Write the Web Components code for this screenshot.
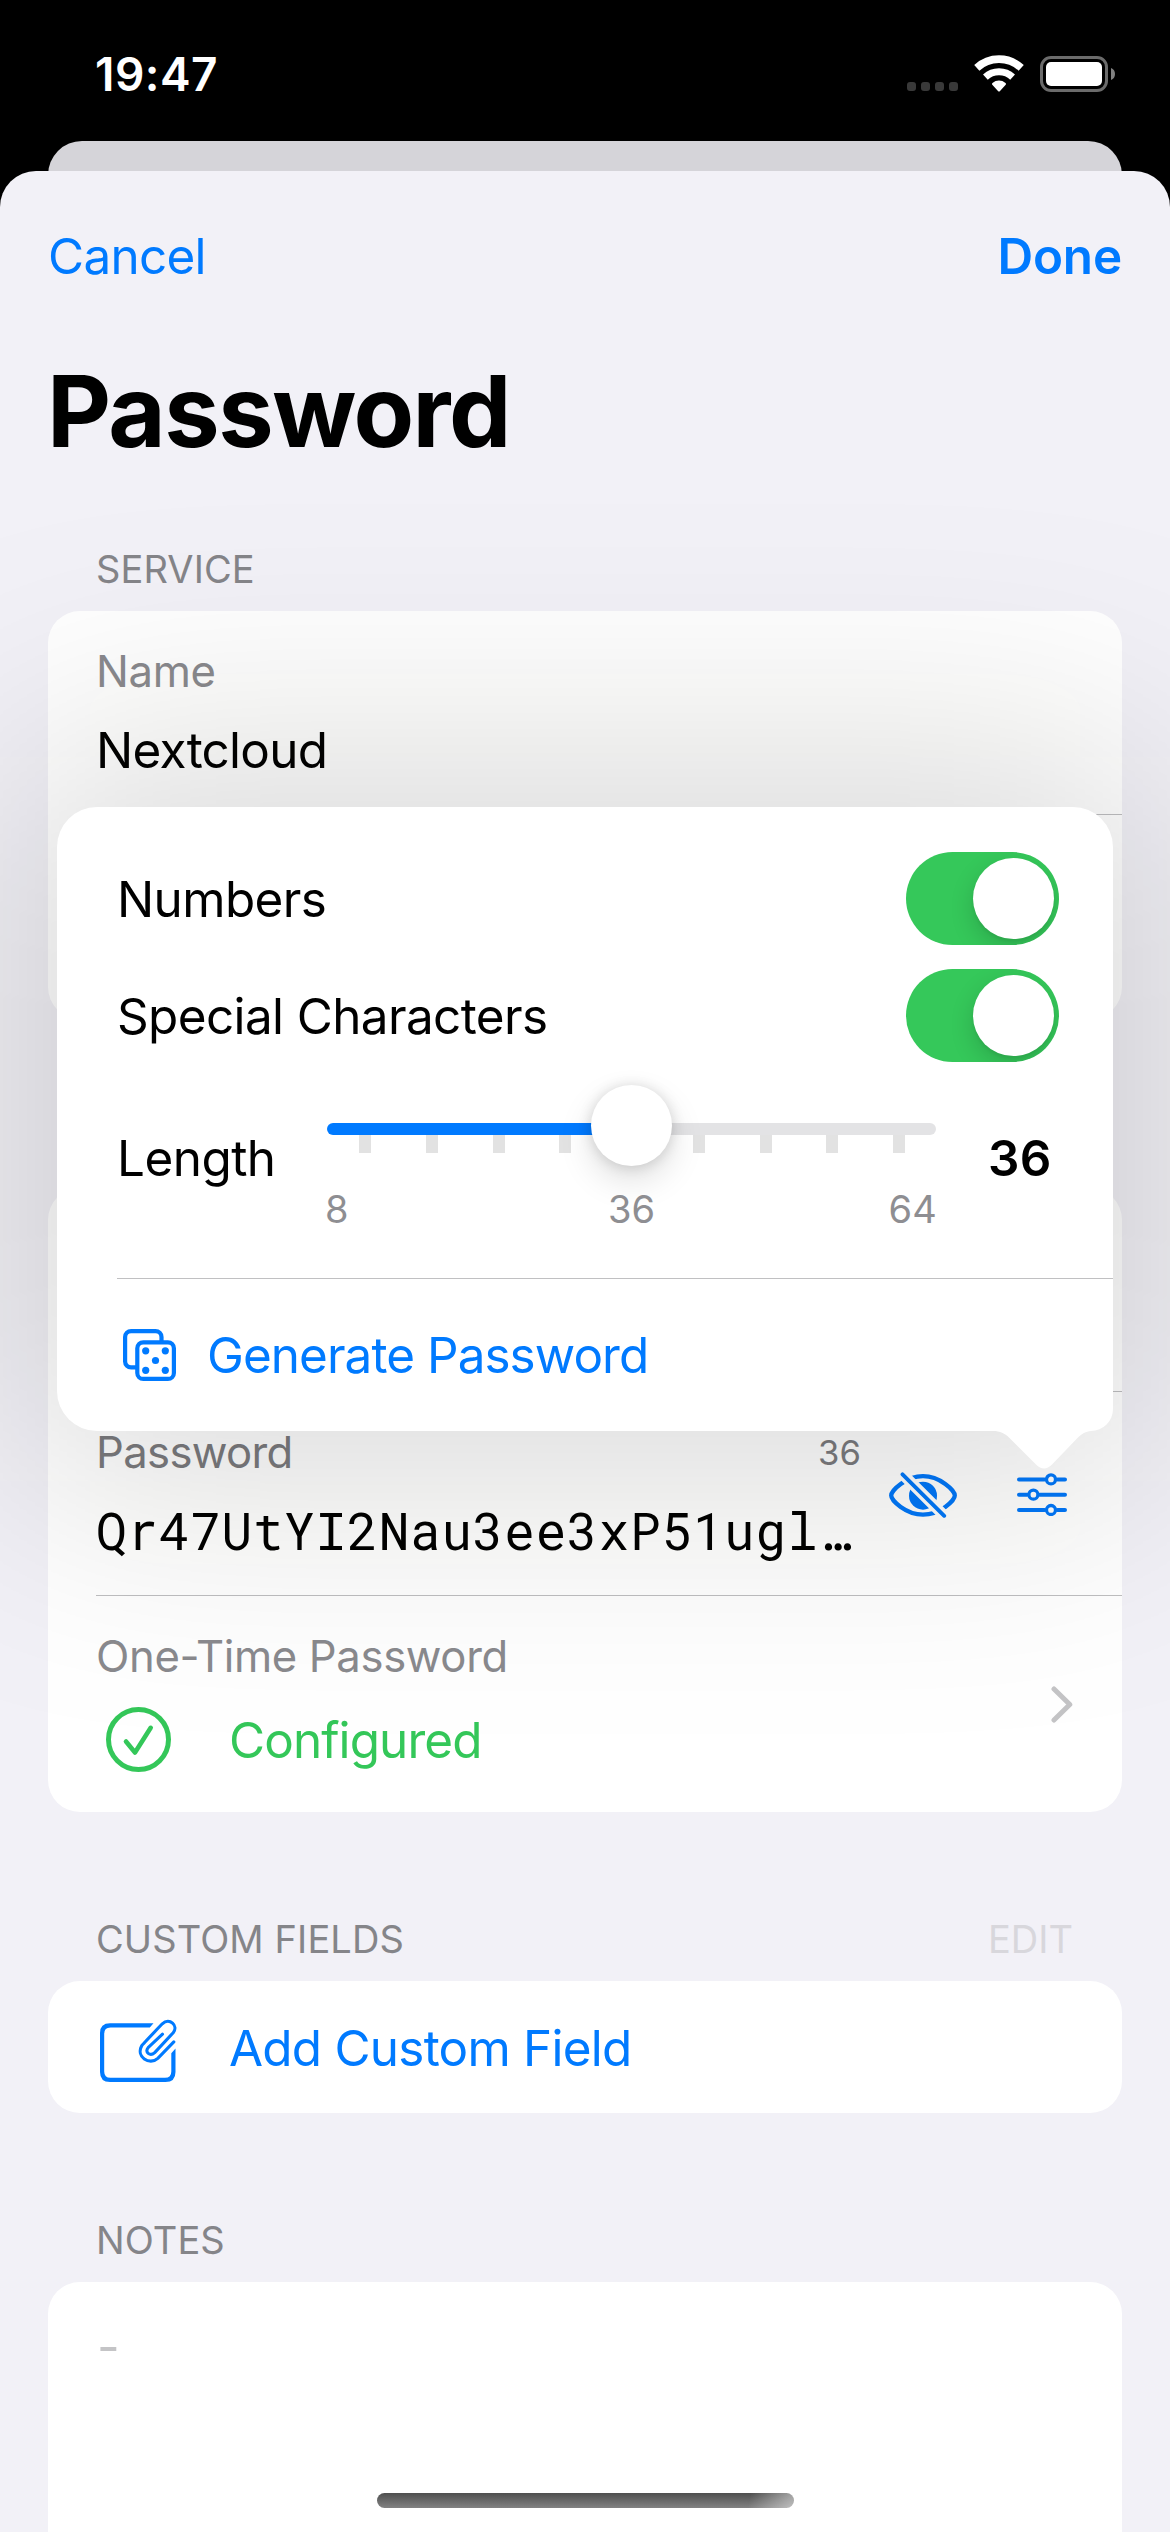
<!DOCTYPE html>
<html lang="en">
<head>
<meta charset="utf-8">
<title>Password</title>
<style>
html,body{margin:0;padding:0;background:#000}
body{width:1170px;height:2532px;overflow:hidden;font-family:Inter,"Liberation Sans",sans-serif;color:#000}
</style>
</head>
<body>
<phone-screen></phone-screen>
<script>
const define = (name, css, html) => customElements.define(name, class extends HTMLElement {
  constructor() {
    super();
    this.attachShadow({ mode: 'open' }).innerHTML = `<style>*{box-sizing:border-box}${css}</style>${html}`;
  }
});

define('status-bar', `
  :host{display:flex;flex:none;height:141px;padding:54px 55px 0 95px;justify-content:space-between;align-items:flex-start;box-sizing:border-box}
  .time{font-size:46px;font-weight:600;line-height:41px;letter-spacing:.46px;color:#fff}
  svg{display:block;margin-top:1px}
`, `
  <span class="time">19:47</span>
  <svg width="208" height="38" viewBox="0 0 208 38" fill="none">
    <g fill="#393939"><rect x="0" y="27" width="9" height="9" rx="3"/><rect x="14" y="27" width="9" height="9" rx="3"/><rect x="28" y="27" width="9" height="9" rx="3"/><rect x="42" y="27" width="9" height="9" rx="3"/></g>
    <g stroke="#fff"><path stroke-width="7.6" d="M69.8 12.9A32.6 32.6 0 0 1 114.2 12.9"/><path stroke-width="7" d="M78.4 22.1A20 20 0 0 1 105.6 22.1"/></g>
    <path fill="#fff" d="M91.2 36.2L85.3 29.8C84.8 29.2 84.9 28.5 85.5 28C89.3 24.7 94.7 24.7 98.5 28C99.1 28.5 99.2 29.2 98.7 29.8L92.8 36.2Q92 37 91.2 36.2Z"/>
    <rect x="134.5" y="2.5" width="65" height="33" rx="9.5" stroke="#6b6b6b" stroke-width="3"/>
    <rect x="139" y="7" width="56" height="24" rx="5" fill="#fff"/>
    <path fill="#808080" d="M204 13Q208 14.500 208 19T204 25Z"/>
  </svg>
`);

define('nav-bar', `
  :host{display:flex;flex:none;height:170px;padding:0 48px;justify-content:space-between;align-items:center;color:#007aff;font-size:49.4px;line-height:60px;box-sizing:border-box}
  .cancel{letter-spacing:-.7px}
  .done{font-weight:600;letter-spacing:-.15px}
`, `<span class="cancel"><slot name="left"></slot></span><span class="done"><slot name="right"></slot></span>`);

define('large-title', `
  :host{display:flex;flex:none;height:140px;align-items:center;padding-left:47px;font-size:99px;line-height:120px;font-weight:700;letter-spacing:-1.53px}
`, `<slot></slot>`);

define('section-header', `
  :host{display:flex;flex:none;height:169px;box-sizing:border-box;padding:0 97px 19px 96px;align-items:flex-end;justify-content:space-between;font-size:38px;line-height:46px;letter-spacing:.1px;color:#858589}
  :host([first]){height:130px}
  .act{color:#d8d7dc;letter-spacing:0}
`, `<span><slot></slot></span><span class="act"><slot name="action"></slot></span>`);

define('form-card', `
  :host{display:flex;flex-direction:column;flex:none;margin:0 48px;border-radius:32px;background:#fff;overflow:hidden}
  :host([grow]){flex:1;border-radius:32px 32px 0 0}
`, `<slot></slot>`);

define('form-row', `
  :host{display:flex;flex-direction:column;height:204px}
  .body{flex:1;display:flex;align-items:stretch;padding:0 49px 0 48px}
  .text{flex:1;min-width:0;display:flex;flex-direction:column;padding-top:35px}
  .label{display:flex;justify-content:space-between;font-size:43.6px;line-height:52px;letter-spacing:var(--label-ls,-.34px);color:var(--label-color,#8a8a8e);white-space:nowrap}
  .note{font-size:34.6px;letter-spacing:.14px;line-height:50px}
  .value{margin-top:var(--value-gap,22px);font-size:49.4px;line-height:60px;letter-spacing:var(--value-ls,-.72px);white-space:nowrap}
  .tools{flex:none;display:flex;align-items:center}
  .line{flex:none;height:1px;margin-left:48px;background:#bfbfc1}
  :host([last]) .line{display:none}
`, `
  <div class="body">
    <div class="text"><div class="label"><slot name="label"></slot><span class="note"><slot name="note"></slot></span></div><div class="value"><slot></slot></div></div>
    <div class="tools"><slot name="tools"></slot></div>
  </div>
  <div class="line"></div>
`);

define('password-text', `
  :host{display:block;font-family:"Roboto Mono","Liberation Mono",monospace;font-size:51px;line-height:60px;letter-spacing:.8px}
`, `<slot></slot>`);

define('row-tools', `
  :host{display:flex;align-items:center;gap:60px;padding:2px 6px 0 28px}
  svg{display:block}
`, `
  <svg width="68" height="46" viewBox="0 0 68 46" fill="none" stroke-linecap="round">
    <mask id="cut" maskUnits="userSpaceOnUse" x="-2" y="-2" width="72" height="50"><rect x="-2" y="-2" width="72" height="50" fill="#fff"/><path d="M8 -3.500L61 49.500" stroke="#000" stroke-width="11"/></mask>
    <g mask="url(#cut)"><path stroke="#0077fa" stroke-width="4.300" d="M2.200 23.500C2.200 18.500 17 4.200 34 4.200S65.800 18.500 65.800 23.500S51 42.700 34 42.700S2.200 28.500 2.200 23.500Z"/><circle cx="34" cy="23.700" r="14" fill="#0077fa"/></g>
    <path stroke="#0077fa" stroke-width="3.900" d="M13.500 2.300L55.200 43.800"/>
  </svg>
  <svg width="50" height="43" viewBox="0 0 50 43" fill="none" stroke="#0077fa" stroke-linecap="round">
    <path stroke-width="4" d="M2 6.400H27.500M40.500 6.400H48M2 21.700H10M22.800 21.700H48M2 37H27.500M40.500 37H48"/>
    <g stroke-width="3.300"><circle cx="34" cy="6.400" r="4.500"/><circle cx="16.400" cy="21.700" r="4.500"/><circle cx="34" cy="37" r="4.500"/></g>
  </svg>
`);

define('disclosure-chevron', `:host{display:block}svg{display:block}`, `
  <svg width="22" height="37" viewBox="0 0 22 37" fill="none"><path d="M3 3L18.800 18.500L3 34" stroke="#c4c4c6" stroke-width="5" stroke-linecap="round" stroke-linejoin="round"/></svg>`);

define('icon-label', `
  :host{display:flex;align-items:center;gap:49px}
  .icon{flex:none;display:flex;width:84px;justify-content:center;padding-top:var(--drop,0)}
`, `<span class="icon"><slot name="icon"></slot></span><span><slot></slot></span>`);

define('check-icon', `:host{display:block;height:65px}svg{display:block}`, `
  <svg width="65" height="65" viewBox="0 0 65 65" fill="none" stroke="#34c759"><circle cx="32.500" cy="32.500" r="30" stroke-width="5"/><path stroke-width="4.600" stroke-linecap="round" stroke-linejoin="round" d="M20 34.500L29 45.500L44.700 20.800"/></svg>`);

define('attach-icon', `:host{display:block}svg{display:block;overflow:visible}`, `
  <svg width="76" height="62" viewBox="0 0 76 62" fill="none" stroke="#007aff">
    <path fill="#007aff" stroke="none" d="M53.500 3.300H10Q0 3.300 0 13V52Q0 62 10 62H65.500Q75.500 62 75.500 52V28.500L71.300 33.200V51.500Q71.300 57.800 65 57.800H10.500Q4.200 57.800 4.200 51.500V14Q4.200 7.600 10.500 7.600H49.800Z"/>
    <path stroke-width="3.100" stroke-linecap="round" stroke-linejoin="round" d="M73.800 21.900L57.800 38.300C49.500 46 35.500 36.500 41.800 25.600Q42.300 24.800 62.300 3.800C69.500 -2.800 78.800 5.600 73.200 12.700L54.700 32.600C50 37 44.300 32 48.100 27.700L62.500 14.200"/>
  </svg>`);

define('dice-icon', `:host{display:block}svg{display:block}`, `
  <svg width="53" height="52" viewBox="0 0 53 52" fill="none" stroke="#007aff" stroke-width="4.200">
    <path d="M13 38.400H8.100a6 6 0 0 1-6-6V8.100a6 6 0 0 1 6-6H32.500a6 6 0 0 1 6 6V12"/>
    <rect x="14.300" y="13.300" width="36.600" height="36.600" rx="6"/>
    <g fill="#007aff" stroke="none"><circle cx="22.700" cy="21.800" r="3.600"/><circle cx="42.300" cy="21.800" r="3.600"/><circle cx="32.500" cy="31.500" r="3.600"/><circle cx="22.700" cy="41.300" r="3.600"/><circle cx="42.300" cy="41.300" r="3.600"/></g>
  </svg>`);

define('toggle-switch', `
  :host{display:flex;flex:none;box-sizing:border-box;width:153px;height:93px;padding:6px 5px;justify-content:flex-end;border-radius:47px;background:#35c85a;overflow:hidden}
  i{display:block;width:81px;height:81px;border-radius:50%;background:#fff;box-shadow:0 9px 24px rgba(0,0,0,.16),0 3px 3px rgba(0,0,0,.05)}
`, `<i></i>`);

define('switch-row', `
  :host{display:flex;flex:none;height:93px;padding:0 54px 0 60px;align-items:center;justify-content:space-between;font-size:49.4px;line-height:60px;letter-spacing:-.6px}
`, `<span><slot></slot></span><toggle-switch></toggle-switch>`);

define('length-slider', `
  :host{display:block;position:relative;flex:none;width:609px;height:148px}
  .track{height:12px;margin-top:39px;border-radius:6px;background:linear-gradient(90deg,#007aff 50%,#e3e3e5 50%)}
  .ticks{display:flex;justify-content:space-between;padding:0 31px 0 32px;height:18px}
  .ticks i{width:12px;background:#e2e2e2}
  .thumb{position:absolute;left:264px;top:1px;width:81px;height:81px;border-radius:50%;background:#fff;box-shadow:0 14px 34px rgba(0,0,0,.13),0 1px 14px rgba(0,0,0,.15)}
  .scale{position:relative;display:flex;justify-content:space-between;margin:33px -1px 0 -2px;font-size:38px;line-height:46px;letter-spacing:.2px;color:#8e8e92}
  .scale .mid{padding-left:26px}
`, `
  <div class="track"></div>
  <div class="ticks"><i></i><i></i><i></i><i></i><i></i><i></i><i></i><i></i><i></i></div>
  <div class="thumb"></div>
  <div class="scale"><span>8</span><span class="mid">36</span><span>64</span></div>
`);

define('slider-row', `
  :host{display:flex;flex:none;height:192px;padding:0 60px;align-items:center;font-size:49.4px;line-height:60px}
  .name{width:210px;letter-spacing:-.5px}
  .value{flex:1;padding-left:52px;font-weight:600;letter-spacing:.4px}
`, `<span class="name"><slot></slot></span><length-slider></length-slider><span class="value"><slot name="value"></slot></span>`);

define('action-row', `
  :host{display:flex;flex:1;margin:24px 0 0 60px;border-top:1px solid #c0c0c2;padding-left:6px;align-items:center;gap:31px;color:#007aff;font-size:49.4px;line-height:60px;letter-spacing:-.92px}
`, `<dice-icon></dice-icon><span><slot></slot></span>`);

define('generator-popover', `
  :host{display:block;position:absolute;left:57px;top:807px;width:1056px;height:624px}
  .glow{position:absolute;inset:-50px;background:rgba(14,14,5,.155);border-radius:80px;filter:blur(125px)}
  .panel{position:relative;display:flex;flex-direction:column;height:624px;padding-top:45px;border-radius:40px 40px 22px 40px;background:#fff}
  .gap{flex:none;height:24px}
  .arrow{position:absolute;left:930px;top:623px}
`, `
  <div class="glow"></div>
  <div class="panel">
    <switch-row>Numbers</switch-row>
    <div class="gap"></div>
    <switch-row>Special Characters</switch-row>
    <slider-row>Length<span slot="value">36</span></slider-row>
    <action-row>Generate Password</action-row>
  </div>
  <svg class="arrow" width="116" height="40" viewBox="0 0 116 40"><path fill="#fff" d="M0 0V1H6C13 1 18 3.500 22 7.500L49 34.500Q57 42.500 65 34.500L90 8.500C95 3.500 99 1.500 104 1V0Z"/></svg>
`);

define('home-indicator', `
  :host{display:block;position:absolute;left:377px;top:2493px;width:417px;height:15px;border-radius:8px;background:linear-gradient(100deg,transparent 89%,rgba(255,255,255,.45) 99%),linear-gradient(180deg,#4f4f4f,#828282)}
`, ``);

define('modal-sheet', `
  :host{display:flex;flex:1;flex-direction:column;min-height:0;border-radius:36px 36px 0 0;background:#f2f1f7;overflow:hidden}
`, `<slot></slot>`);

define('phone-screen', `
  :host{display:flex;flex-direction:column;position:relative;width:1170px;height:2532px;background:#000;overflow:hidden}
  .behind{flex:none;height:66px;margin:0 48px -36px;border-radius:34px 34px 0 0;background:linear-gradient(#d5d4d9 31px,#000 31px)}
  form-row.otp{height:216px;--value-gap:24px;--value-ls:-.89px;color:#34c759}
  form-row.pw{--label-ls:-.65px;--label-color:#7b7b7e}
  .add{display:flex;height:132px;align-items:center;padding:2px 48px 0;color:#007aff;font-size:49.4px;line-height:60px;letter-spacing:-.74px;--drop:6px}
  .notes{padding:34px 49px;font-size:49.4px;line-height:60px;color:#c4c4c6}
`, `
  <status-bar></status-bar>
  <div class="behind"></div>
  <modal-sheet>
    <nav-bar><span slot="left">Cancel</span><span slot="right">Done</span></nav-bar>
    <large-title>Password</large-title>
    <section-header first>SERVICE</section-header>
    <form-card>
      <form-row><span slot="label">Name</span>Nextcloud</form-row>
      <form-row last></form-row>
    </form-card>
    <section-header></section-header>
    <form-card>
      <form-row></form-row>
      <form-row class="pw"><span slot="label">Password</span><span slot="note">36</span><password-text>Qr47UtYI2Nau3ee3xP51ugl…</password-text><row-tools slot="tools"></row-tools></form-row>
      <form-row class="otp" last><span slot="label">One-Time Password</span><icon-label><check-icon slot="icon"></check-icon>Configured</icon-label><disclosure-chevron slot="tools"></disclosure-chevron></form-row>
    </form-card>
    <section-header>CUSTOM FIELDS<span slot="action">EDIT</span></section-header>
    <form-card>
      <div class="add"><icon-label><attach-icon slot="icon"></attach-icon>Add Custom Field</icon-label></div>
    </form-card>
    <section-header>NOTES</section-header>
    <form-card grow><div class="notes">-</div></form-card>
  </modal-sheet>
  <generator-popover></generator-popover>
  <home-indicator></home-indicator>
`);
</script>
</body>
</html>
